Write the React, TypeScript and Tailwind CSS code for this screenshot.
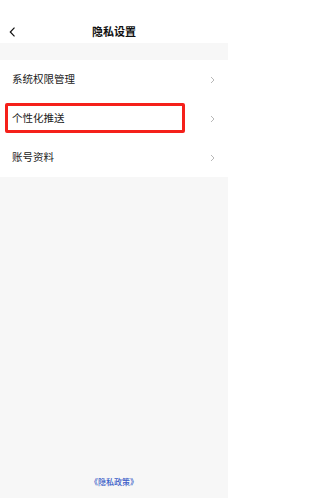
import React from "react";

const font = { fontFamily: '"Noto Sans CJK SC", "Noto Sans", sans-serif' };

function Chevron() {
  return (
    <svg width="5" height="8" viewBox="0 0 5 8" className="shrink-0">
      <path d="M1 1 L4 4 L1 7" fill="none" stroke="#b8b8b8" strokeWidth="1" />
    </svg>
  );
}

function Row({ label, highlight }: { label: string; highlight?: boolean }) {
  return (
    <div className="relative flex h-[39px] items-center justify-between bg-white pl-3 pr-[13px]">
      <span className="text-[10.5px] leading-none text-[#222]">{label}</span>
      <Chevron />
      {highlight && (
        <div className="absolute left-[5px] top-[4px] h-[30px] w-[180px] rounded-[2px] border-[3px] border-[#f5201a]" />
      )}
    </div>
  );
}

export default function App() {
  return (
    <div className="flex h-[498px] w-[228px] flex-col bg-[#f7f7f7]" style={font}>
      <div className="relative flex h-[43px] items-center justify-center bg-white">
        <svg width="7" height="10" viewBox="0 0 7 10" className="absolute left-[9px] top-[27px]">
          <path d="M5.5 0.7 L1.3 5 L5.5 9.3" fill="none" stroke="#111" strokeWidth="1.2" />
        </svg>
        <span className="mt-[20px] text-[11px] font-bold leading-none text-[#111]">隐私设置</span>
      </div>
      <div className="h-[17px]" />
      <Row label="系统权限管理" />
      <Row label="个性化推送" highlight />
      <Row label="账号资料" />
      <div className="flex-1" />
      <div className="flex h-[20px] items-start justify-center">
        <span className="text-[8px] font-medium leading-none text-[#3a5cc8]">《隐私政策》</span>
      </div>
    </div>
  );
}
